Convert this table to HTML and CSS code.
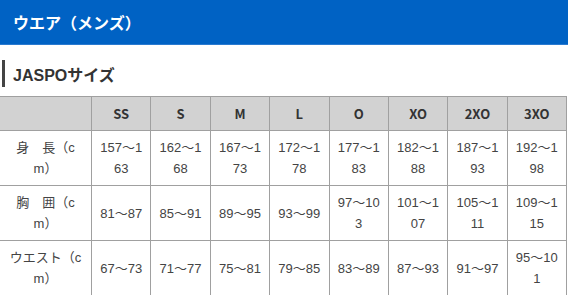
FILE: index.html
```html
<!DOCTYPE html>
<html lang="ja">
<head>
<meta charset="utf-8">
<link rel="stylesheet" href="styles.css">
</head>
<body>
<div class="band"><h1 class="band-title">ウエア（メンズ）</h1></div>
<h2 class="sub">JASPOサイズ</h2>
<table class="size">
  <colgroup>
    <col class="c-first"><col><col><col><col><col><col><col><col>
  </colgroup>
  <thead>
    <tr><th></th><th>SS</th><th>S</th><th>M</th><th>L</th><th>O</th><th>XO</th><th>2XO</th><th>3XO</th></tr>
  </thead>
  <tbody>
    <tr><td class="lab">身　長（cm）</td><td>157～163</td><td>162～168</td><td>167～173</td><td>172～178</td><td>177～183</td><td>182～188</td><td>187～193</td><td>192～198</td></tr>
    <tr><td class="lab">胸　囲（cm）</td><td>81～87</td><td>85～91</td><td>89～95</td><td>93～99</td><td>97～103</td><td>101～107</td><td>105～111</td><td>109～115</td></tr>
    <tr><td class="lab">ウエスト（cm）</td><td>67～73</td><td>71～77</td><td>75～81</td><td>79～85</td><td>83～89</td><td>87～93</td><td>91～97</td><td>95～101</td></tr>
  </tbody>
</table>
</body>
</html>
```
FILE: styles.css
```css
html, body {
  margin: 0;
  padding: 0;
  background: #fff;
  font-family: "Liberation Sans", "Noto Sans CJK JP", sans-serif;
  color: #333;
  overflow: hidden;
}
.band {
  background: #0062c4;
  height: 45px;
  display: flex;
  align-items: center;
  padding-left: 13px;
  border-bottom: 1px solid #2a7ad0;
  box-sizing: border-box;
}
.band-title {
  margin: 0;
  color: #fff;
  font-size: 16px;
  font-weight: bold;
  font-family: "Noto Sans CJK JP", sans-serif;
  line-height: 20px;
}
.sub {
  margin: 15px 0 9px 2px;
  border-left: 3px solid #444;
  padding-left: 8px;
  height: 27px;
  display: flex;
  align-items: center;
  font-size: 16px;
  font-weight: bold;
  color: #333;
  font-family: "Liberation Sans", "Noto Sans CJK JP", sans-serif;
}
.size {
  width: 568px;
  margin-left: -1px;
  border-collapse: collapse;
  table-layout: fixed;
  font-size: 13px;
}
.c-first { width: 92px; }
.size th, .size td {
  border: 1px solid #a0a0a0;
  text-align: center;
  vertical-align: middle;
  line-height: 21px;
  word-break: break-all;
}
.size th {
  background: #d2d2d2;
  font-family: "Noto Sans CJK JP", sans-serif;
  font-weight: bold;
  font-size: 13px;
  padding: 6px 4px;
  height: 21px;
  color: #333;
}
.size td {
  padding: 6px 6px;
  height: 42px;
  color: #444;
}
.size td.lab {
  padding: 6px 9px;
}
```
